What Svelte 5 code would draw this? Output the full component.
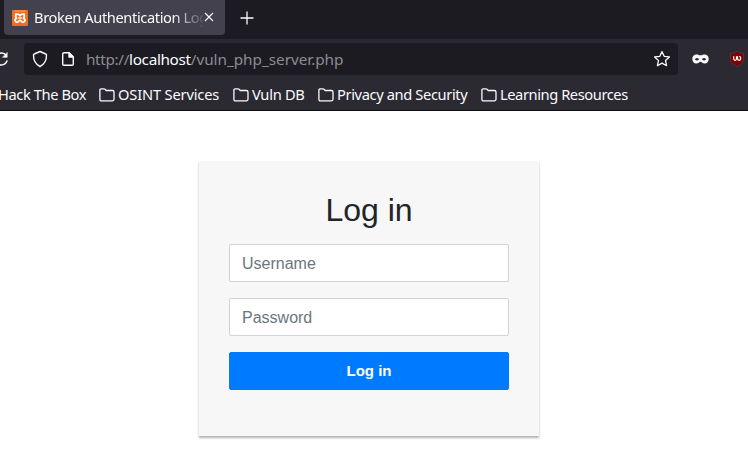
<script>
  const bookmarks = [
    { name: 'Hack The Box', width: 88, spacing: -0.4 },
    { name: 'OSINT Services', width: 102, spacing: -0.17 },
    { name: 'Vuln DB', width: 53, spacing: -0.28 },
    { name: 'Privacy and Security', width: 131, spacing: -0.37 },
    { name: 'Learning Resources', width: 128, spacing: -0.42 }
  ];
</script>

<div class="window">
  <div class="tabs">
    <div class="tab">
      <svg class="favicon" width="16" height="16" viewBox="0 0 16 16">
        <rect width="16" height="16" rx="1" fill="#ee6f1f" />
        <path d="M2.500 1h11" stroke="#f6a873" stroke-width="1" />
        <path d="M3 4.100h2.300Q7 4.100 8 5.800 9 4.100 10.700 4.100H13M4.300 4.300Q2.800 6.300 4.500 8 2.300 9.700 3.500 11.500 4.500 12.700 6.200 11.700L8 10.200l1.800 1.500q1.700 1 2.700-.2 1.200-1.800-1-3.500 1.700-1.700.2-3.700M6.200 8h3.600" fill="none" stroke="#fff" stroke-width="1.700" stroke-linejoin="round" />
      </svg>
      <span class="title">Broken Authentication Log</span>
      <svg class="close" width="10" height="10" viewBox="0 0 10 10"><path d="M1 1l8 8M9 1L1 9" stroke="#fbfbfe" stroke-width="1.15" /></svg>
    </div>
    <svg class="plus" width="14" height="14" viewBox="0 0 14 14"><path d="M7 1v12M1 7h12" stroke="#fbfbfe" stroke-width="1.3" stroke-linecap="round" /></svg>
  </div>

  <div class="toolbar">
    <svg class="reload" width="9" height="16" viewBox="7 0 9 16" fill="none" stroke="#fbfbfe" stroke-width="1.5" stroke-linecap="round" stroke-linejoin="round">
      <path d="M13.200 4.500A6 6 0 1 0 14 10" /><path d="M14.200 1.800v4.500H9.800z" fill="#fbfbfe" stroke-width=".6" />
    </svg>
    <div class="url">
      <svg class="shield" width="16" height="18" viewBox="0 0 16 18" fill="none" stroke="#fbfbfe" stroke-width="1.4" stroke-linejoin="round"><path d="M8 1.500L13.700 4c.5.2.8.6.8 1.100C14.600 10.500 12 14.500 8 16.500 4 14.500 1.400 10.500 1.500 5.100c0-.5.300-.9.800-1.100z" /></svg>
      <svg class="page" width="14" height="16" viewBox="0 0 14 16" fill="none" stroke="#fbfbfe" stroke-width="1.4" stroke-linejoin="round"><path d="M8 1.700H3Q1.700 1.700 1.700 3v10q0 1.300 1.300 1.300h8q1.300 0 1.300-1.300V6z" /><path d="M8 1.700V6h4.300z" fill="#fbfbfe" /></svg>
      <span class="address">http://<b>localhost</b><span class="path">/vuln_php_server.php</span></span>
      <svg class="star" width="18" height="18" viewBox="0 0 18 18" fill="none" stroke="#fbfbfe" stroke-width="1.300" stroke-linejoin="round"><path d="M9 1.600l2.200 4.700 5.200.6-3.900 3.500 1.100 5.300L9 13.100l-4.600 2.600 1.100-5.300-3.900-3.500 5.200-.6z" /></svg>
    </div>
    <svg class="mask" width="17" height="10" viewBox="0 0 17 10"><path fill="#fbfbfe" fill-rule="evenodd" d="M4.500.5C6.200.5 7.200 1.300 8.500 1.300S10.800.5 12.500.5C15 .5 16.700 2.200 16.700 4.700 16.700 7.700 15 9.600 12.700 9.600 10.600 9.600 9.700 7.800 8.500 7.800S6.400 9.600 4.300 9.600C2 9.600.3 7.700.3 4.700.3 2.200 2 .5 4.500.5zM2.800 5.200Q5 7.900 7.100 5.200 5 2.600 2.800 5.200zM9.900 5.200q2.100 2.700 4.300 0Q12 2.600 9.900 5.200z" /></svg>
    <svg class="ublock" width="16" height="16" viewBox="0 0 16 16"><path d="M8 .4q3 2 6.500 2v5.100c0 4-2.800 6.300-6.500 8.100-3.700-1.800-6.500-4.100-6.500-8.100V2.400Q5 2.400 8 .4z" fill="#800000" stroke="#554149" stroke-width=".7" /><path d="M4.700 5.300v2.500q0 1.500 1.400 1.500t1.400-1.500V5.300M8.500 5.300v2q0 2 1.600 2t1.600-2-1.600-1.600" fill="none" stroke="#fff" stroke-width="1.200" /></svg>
  </div>

  <div class="bookmarks">
    {#each bookmarks as item, i}
      <div class="bookmark">
        {#if i > 0}
          <svg width="16" height="14" viewBox="0 0 16 14" fill="none" stroke="#fbfbfe" stroke-width="1.300" stroke-linejoin="round"><path d="M.9 11.300V2.200Q.9.900 2.200.9H5q.6 0 1 .4l1.200 1.200h6.300q1.500 0 1.500 1.500v7.300q0 1.500-1.500 1.500H2.400Q.9 12.800.9 11.300z" /></svg>
        {/if}
        <span style:width="{item.width}px" style:letter-spacing="{item.spacing}px">{item.name}</span>
      </div>
    {/each}
  </div>

  <main>
    <form onsubmit={(e) => e.preventDefault()}>
      <h2>Log in</h2>
      <input type="text" placeholder="Username" aria-label="Username" />
      <input type="password" placeholder="Password" aria-label="Password" />
      <button type="submit">Log in</button>
    </form>
  </main>
</div>

<style>
  * { box-sizing: border-box; }
  .window { width: 748px; height: 475px; overflow: hidden; background: #fff; font: 14.67px/20px "Noto Sans", sans-serif; color: #fbfbfe; }
  svg { display: block; flex: none; }
  .tabs { display: flex; height: 39px; background: #1c1b22; padding-left: 4px; }
  .tab { display: flex; align-items: center; width: 221px; height: 35px; padding: 0 11px 0 8px; background: #42414d; border-radius: 0 0 4px 4px; }
  .title { width: 169px; height: 20px; margin: -2px 0 0 6px; overflow: hidden; white-space: nowrap; letter-spacing: -.4px; mask-image: linear-gradient(to right, #000 138px, transparent 172px); }
  .close { margin-left: 1px; margin-top: -1px; }
  .plus { margin: 11px 0 0 15px; }
  .toolbar { display: flex; align-items: center; height: 40px; background: #2b2a33; }
  .url { display: flex; align-items: center; width: 654px; height: 32px; margin-left: 15px; padding: 0 7px 0 8px; background: #1c1b22; border-radius: 4px; }
  .page { margin-left: 13px; }
  .address { margin-left: 11px; color: #8c8c92; white-space: nowrap; font-size: 15.300px; letter-spacing: -.33px; }
  .address b { font-weight: 400; color: #fbfbfe; }
  .path { letter-spacing: -.02px; }
  .star { margin-left: auto; }
  .mask { margin-left: 14px; }
  .ublock { margin-left: 20px; }
  .bookmarks { display: flex; align-items: center; height: 32px; background: #2b2a33; border-bottom: 1px solid #0c0c0d; }
  .bookmark { display: flex; align-items: center; gap: 3px; margin-right: 13px; }
  .bookmark:first-child { margin-left: -2px; }
  .bookmark:nth-child(2), .bookmark:nth-child(3) { margin-right: 13px; }
  .bookmark span { margin-top: -2px; white-space: nowrap; }
  main { padding-left: 199px; padding-top: 50px; }
  form { width: 340px; height: 275.400px; padding: 30px; background: #f7f7f7; box-shadow: 0 2px 2px rgba(0, 0, 0, .3); font-family: "Liberation Sans", Arial, sans-serif; }
  h2 { margin: 0 0 15px; color: #212529; font-size: 32px; font-weight: 500; line-height: 1.2; text-align: center; }
  input { display: block; width: 100%; height: 38px; margin-bottom: 16px; padding: 7px 12px 5px; border: 1px solid #ced4da; border-radius: 2px; background: #fff; font: 16px/24px "Liberation Sans", Arial, sans-serif; }
  input::placeholder { color: #6c757d; opacity: 1; }
  button { display: block; width: 100%; height: 38px; border: 1px solid #007bff; border-radius: 2px; padding: 0; background: #007bff; color: #fff; font: bold 15px/22.500px "Liberation Sans", Arial, sans-serif; }
</style>
